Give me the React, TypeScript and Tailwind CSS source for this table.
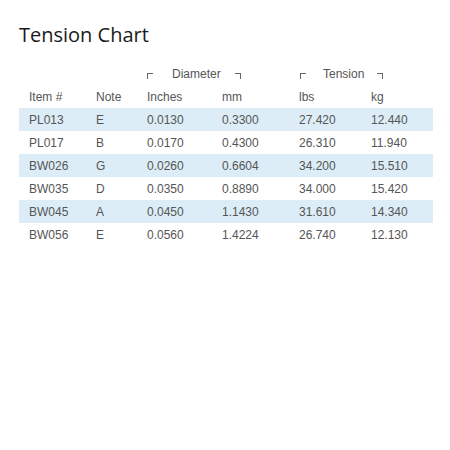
import React from "react";

const rows = [
  ["PL013", "E", "0.0130", "0.3300", "27.420", "12.440"],
  ["PL017", "B", "0.0170", "0.4300", "26.310", "11.940"],
  ["BW026", "G", "0.0260", "0.6604", "34.200", "15.510"],
  ["BW035", "D", "0.0350", "0.8890", "34.000", "15.420"],
  ["BW045", "A", "0.0450", "1.1430", "31.610", "14.340"],
  ["BW056", "E", "0.0560", "1.4224", "26.740", "12.130"],
];

const cols = "grid grid-cols-[67px_51px_75px_77px_72px_72px]";

function Open() {
  return <span className="inline-block w-[6px] h-[6px] border-t border-l border-[#666] mt-[4px]" />;
}
function Close() {
  return <span className="inline-block w-[6px] h-[6px] border-t border-r border-[#666] mt-[4px]" />;
}

export default function App() {
  return (
    <div className="w-[450px] h-[450px] bg-white pl-[19px] pt-[21px]" style={{ fontFamily: "'Liberation Sans', Arial, sans-serif" }}>
      <h1 className="text-[20px] leading-[28px] text-[#1a1a1a] h-[41px]" style={{ fontFamily: "'Open Sans', 'Noto Sans', sans-serif" }}>
        Tension Chart
      </h1>
      <div className="w-[414px] text-[12px] text-[#555]">
        <div className={`${cols} h-[23px] items-center`}>
          <div />
          <div />
          <div className="col-span-2 pl-[10px] flex items-center">
            <Open />
            <span className="ml-[19px]">Diameter</span>
            <span className="ml-[14px] flex"><Close /></span>
          </div>
          <div className="col-span-2 pl-[11px] flex items-center">
            <Open />
            <span className="ml-[17px]">Tension</span>
            <span className="ml-[13px] flex"><Close /></span>
          </div>
        </div>
        <div className={`${cols} h-[23px] items-center`}>
          {["Item #", "Note", "Inches", "mm", "lbs", "kg"].map((h) => (
            <div key={h} className="pl-[10px]">{h}</div>
          ))}
        </div>
        {rows.map((r, i) => (
          <div key={r[0]} className={`${cols} h-[23px] items-center ${i % 2 === 0 ? "bg-[#dcedf7]" : ""}`}>
            {r.map((c, j) => (
              <div key={j} className="pl-[10px]">{c}</div>
            ))}
          </div>
        ))}
      </div>
    </div>
  );
}
